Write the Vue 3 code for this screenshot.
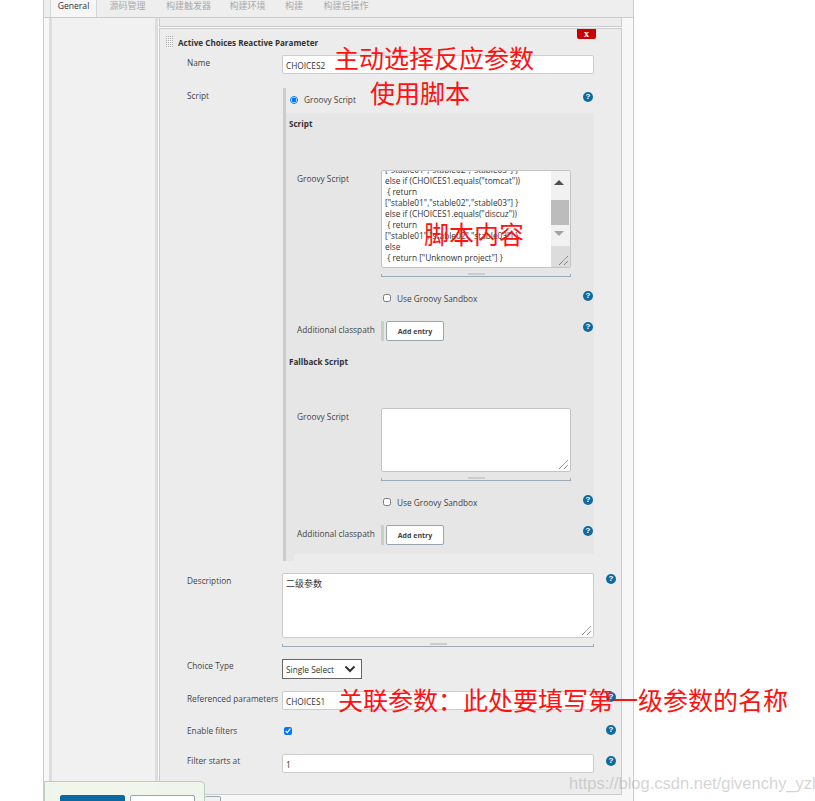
<template>
  <div class="page">
    <div class="shell">
      <div class="tabs">
        <span v-for="(tab, i) in tabs" :key="tab.text" class="tab" :class="{ active: i === 0 }" :style="{ width: tab.width + 'px' }">{{ tab.text }}</span>
      </div>

      <div class="body">
        <div class="side"></div>
        <div class="main">
          <div class="prev-panel"></div>

          <div class="panel">
            <span class="close">x</span>
            <div class="panel-head">
              <span class="grip"></span>
              <b>Active Choices Reactive Parameter</b>
            </div>

            <div class="row name-row">
              <label>Name</label>
              <div class="control"><div class="input">CHOICES2</div></div>
            </div>

            <div class="row script-row">
              <label>Script</label>
              <div class="script-box">
                <div class="radio-line">
                  <input type="radio" checked />
                  <span>Groovy Script</span>
                  <i class="help">?</i>
                </div>
                <div class="script-gray">
                  <section v-for="s in scripts" :key="s.title" class="script-sec">
                    <h4>{{ s.title }}</h4>
                    <div class="sub-row">
                      <label>Groovy Script</label>
                      <div class="ta-wrap">
                        <div class="ta" :style="{ height: s.height + 'px' }">
                          <div v-if="s.lines.length" class="code">
                            <div v-for="(line, n) in s.lines" :key="n" class="code-line">{{ line }}</div>
                          </div>
                          <div v-if="s.lines.length" class="scrollbar">
                            <span class="arrow up"></span>
                            <span class="thumb"></span>
                            <span class="arrow down"></span>
                            <span class="corner"></span>
                          </div>
                          <svg class="resize" width="11" height="11" viewBox="0 0 11 11">
                            <path d="M1 10 10 1M6 10 10 6" stroke="#555" stroke-width="1" stroke-dasharray="1 .6" fill="none" />
                          </svg>
                        </div>
                        <div class="ta-handle"></div>
                      </div>
                    </div>
                    <div class="sandbox">
                      <input type="checkbox" />
                      <span>Use Groovy Sandbox</span>
                      <i class="help">?</i>
                    </div>
                    <div class="sub-row classpath">
                      <label>Additional classpath</label>
                      <span class="cp-bar"></span>
                      <button>Add entry</button>
                      <i class="help">?</i>
                    </div>
                  </section>
                </div>
                <div class="gray-tail"></div>
              </div>
            </div>

            <div class="row desc-row">
              <label>Description</label>
              <div class="control">
                <div class="ta desc">
                  <span class="desc-text">二级参数</span>
                  <svg class="resize" width="11" height="11" viewBox="0 0 11 11">
                    <path d="M1 10 10 1M6 10 10 6" stroke="#555" stroke-width="1" stroke-dasharray="1 .6" fill="none" />
                  </svg>
                </div>
                <div class="ta-handle"></div>
              </div>
              <i class="help">?</i>
            </div>

            <div class="row choice-row">
              <label>Choice Type</label>
              <div class="select-wrap">
                <select class="select"><option>Single Select</option></select>
                <svg class="chevron" width="12" height="8" viewBox="0 0 12 8">
                  <path d="M1.5 1.5 6 6l4.5-4.5" stroke="#333" stroke-width="2" fill="none" />
                </svg>
              </div>
            </div>

            <div class="row ref-row">
              <label>Referenced parameters</label>
              <div class="control"><div class="input">CHOICES1</div></div>
              <i class="help">?</i>
            </div>

            <div class="row filter-row">
              <label>Enable filters</label>
              <div class="control"><input class="filter-check" type="checkbox" checked /></div>
              <i class="help">?</i>
            </div>

            <div class="row starts-row">
              <label>Filter starts at</label>
              <div class="control"><div class="input">1</div></div>
              <i class="help">?</i>
            </div>
          </div>
        </div>
      </div>
    </div>

    <div class="bottom-bar">
      <span class="btn primary"></span>
      <span class="btn"></span>
    </div>
    <span class="btn behind"></span>

    <!-- red notes pasted over the screenshot -->
    <span class="note n1">主动选择反应参数</span>
    <span class="note n2">使用脚本</span>
    <span class="note n3">脚本内容</span>
    <span class="note n4">{{ refNote }}</span>
    <span class="watermark">https://blog.csdn.net/givenchy_yzl</span>
  </div>
</template>

<script setup>
const refNote = '关联参数\uFF1A此处要填写第一级参数的名称'

const tabs = [
  { text: 'General', width: 47 },
  { text: '源码管理', width: 61 },
  { text: '构建触发器', width: 61 },
  { text: '构建环境', width: 57 },
  { text: '构建', width: 36 },
  { text: '构建后操作', width: 68 },
]

const scripts = [
  {
    title: 'Script',
    height: 98,
    lines: [
      '["stable01","stable02","stable03"] }',
      'else if (CHOICES1.equals("tomcat"))',
      ' { return',
      '["stable01","stable02","stable03"] }',
      'else if (CHOICES1.equals("discuz"))',
      ' { return',
      '["stable01","stable02","stable03"] }',
      'else',
      ' { return ["Unknown project"] }',
    ],
  },
  { title: 'Fallback Script', height: 64, lines: [] },
]
</script>

<style>
html, body { margin: 0; background: #fff; }
</style>

<style scoped>
.page {
  position: relative;
  width: 815px;
  height: 801px;
  overflow: hidden;
  background: #fff;
  font-family: "Open Sans", "Noto Sans CJK SC", sans-serif;
  font-size: 8.3px;
  color: #444;
}

.shell {
  width: 591px;
  height: 801px;
  margin-left: 43px;
  border-left: 1px solid #ccc;
  border-right: 1px solid #ccc;
  box-sizing: border-box;
  background: #f7f7f7;
}

.tabs {
  display: flex;
  height: 18px;
  box-sizing: border-box;
  padding-left: 6px;
  background: #eee;
  border-bottom: 1px solid #ccc;
}
.tab {
  box-sizing: border-box;
  font-size: 9px;
  line-height: 12px;
  text-align: center;
  color: #aaa;
}
.tab.active {
  background: #f6f6f6;
  border-left: 1px solid #d5d5d5;
  border-right: 1px solid #d5d5d5;
  font-size: 8.6px;
  color: #333;
}

.body {
  display: flex;
  height: 783px;
}
.side {
  width: 103px;
  margin-left: 5px;
  background: #f1f1f1;
  border-left: 3px solid #ddd;
  border-right: 3px solid #ddd;
}
.main {
  width: 463px;
  margin-left: 1px;
}
.prev-panel {
  height: 9px;
  background: #ececec;
  border: 1px solid #ccc;
  border-top: 0;
  box-sizing: border-box;
  margin-bottom: 1px;
}

.panel {
  position: relative;
  height: 767px;
  box-sizing: border-box;
  background: #ececec;
  border: 1px solid #ccc;
}
.close {
  position: absolute;
  top: 0;
  right: 25px;
  width: 19px;
  height: 10px;
  background: #c00;
  border-radius: 0 0 2px 2px;
  color: #fff;
  font: bold 10px/9px "Liberation Serif", serif;
  text-align: center;
}
.panel-head {
  display: flex;
  align-items: center;
  gap: 5px;
  height: 26px;
  padding-left: 6px;
  font-size: 8.1px;
  color: #333;
}
.grip {
  width: 7px;
  height: 12px;
  background-image:
    repeating-linear-gradient(0deg, #f4f4f4 0 1px, transparent 1px 2px),
    repeating-linear-gradient(90deg, #aaa 0 1px, transparent 1px 2px);
}

.row {
  display: flex;
  align-items: flex-start;
  padding-left: 27px;
}
.row > label {
  width: 95px;
  flex-shrink: 0;
  margin-top: 1px;
  white-space: nowrap;
}
label {
  line-height: 14px;
  white-space: nowrap;
}
.control {
  width: 312px;
  flex-shrink: 0;
}
.row > .help {
  margin: 1px 0 0 12px;
}

.input {
  height: 19px;
  box-sizing: border-box;
  background: #fff;
  border: 1px solid #ccc;
  border-radius: 2px;
  padding-left: 3px;
  line-height: 20px;
  color: #333;
}
.name-row { margin-bottom: 14px; }

.script-row { margin-bottom: 12px; }
.script-box {
  width: 308px;
  margin-left: 1px;
  border-left: 3px solid #ccc;
  height: 473px;
}
.radio-line {
  display: flex;
  align-items: center;
  height: 25px;
  box-sizing: border-box;
  padding: 0 0 2px 4px;
  gap: 6px;
}
.radio-line input {
  width: 8px;
  height: 8px;
  margin: 0;
}
.radio-line .help {
  align-self: flex-start;
  margin: 4px 1px 0 auto;
}

.script-gray {
  width: 308px;
  height: 441px;
  background: #e6e6e6;
  overflow: hidden;
}
.gray-tail {
  width: 8px;
  height: 7px;
  background: #e6e6e6;
}
.script-sec { padding-left: 3px; padding-top: 4px; }
.script-sec + .script-sec { padding-top: 5px; }
h4 {
  margin: 0 0 39px;
  font-size: 8.1px;
  line-height: 14px;
  color: #333;
}
.sub-row {
  display: flex;
  align-items: flex-start;
  padding-left: 8px;
}
.sub-row > label {
  width: 84px;
  flex-shrink: 0;
  padding-top: 2px;
}
.ta-wrap { width: 190px; }
.ta {
  position: relative;
  display: flex;
  box-sizing: border-box;
  background: #fff;
  border: 1px solid #c4c4c4;
  border-radius: 2px;
  overflow: hidden;
}
.code {
  flex: 1;
  padding: 0 0 0 3px;
  margin-top: -7px;
  line-height: 11px;
  color: #333;
  white-space: pre;
  overflow: hidden;
}
.scrollbar {
  position: relative;
  width: 19px;
  background: #f1f1f1;
}
.arrow {
  position: absolute;
  left: 3px;
  width: 0;
  height: 0;
  border-left: 5px solid transparent;
  border-right: 5px solid transparent;
}
.arrow.up { top: 9px; border-bottom: 5px solid #505050; }
.arrow.down { top: 60px; border-top: 5px solid #a3a3a3; }
.thumb {
  position: absolute;
  top: 29px;
  left: 0;
  width: 18px;
  height: 25px;
  background: #bcbcbc;
}
.corner {
  position: absolute;
  left: 0;
  right: 0;
  top: 75px;
  bottom: 0;
  background: #dcdcdc;
}
.resize {
  position: absolute;
  right: 1px;
  bottom: 1px;
}
.ta-handle {
  position: relative;
  height: 3px;
  margin-top: 6px;
  box-sizing: border-box;
  border: 1px solid #9aabb8;
  border-top: 0;
}
.ta-handle::after {
  content: "";
  position: absolute;
  left: 50%;
  top: -1px;
  width: 17px;
  height: 2px;
  margin-left: -8px;
  background: #ccc;
}

.sandbox {
  display: flex;
  align-items: center;
  height: 10px;
  margin: 16px 0 18px 94px;
  gap: 6px;
}
.sandbox input {
  width: 8px;
  height: 8px;
  margin: 0;
}
.sandbox .help { margin: -4px 1px 0 auto; }

.classpath { height: 20px; }
.classpath > label { padding-top: 2px; }
.cp-bar {
  width: 3px;
  height: 20px;
  background: #ccc;
  margin-right: 2px;
}
.classpath button {
  width: 58px;
  height: 20px;
  padding: 0;
  box-sizing: border-box;
  background: #fff;
  border: 1px solid #9aa5ad;
  border-radius: 2px;
  font: bold 7px "Open Sans", sans-serif;
  color: #444;
}
.classpath .help { margin: 1px 1px 0 auto; }
.classpath { padding-bottom: 9px; }

.desc {
  height: 65px;
  border-color: #ccc;
  padding: 4px 3px;
  line-height: 12px;
  color: #333;
}
.desc-text { font-size: 9px; }
.desc-row { margin-bottom: 12px; height: 74px; }
.choice-row { margin-bottom: 12px; height: 20px; }
.choice-row > label { margin-top: 0; }
.select-wrap {
  position: relative;
  width: 80px;
  height: 20px;
}
.select {
  appearance: none;
  display: block;
  width: 80px;
  height: 20px;
  box-sizing: border-box;
  background: #fff;
  border: 1px solid #666;
  border-radius: 0;
  padding: 0 0 0 3px;
  font: 8.3px "Open Sans", sans-serif;
  color: #333;
}
.chevron {
  position: absolute;
  top: 6px;
  right: 6px;
}
.ref-row { height: 19px; margin-bottom: 17px; }
.filter-row { height: 8px; margin-bottom: 19px; }
.filter-row > label { margin-top: -3px; }
.filter-row > .help { margin-top: -2px; }
.filter-check {
  display: block;
  width: 8px;
  height: 8px;
  margin: 0 0 0 2px;
}
.starts-row { height: 19px; }
.starts-row > label { margin-top: 0; }
.starts-row > .help { margin-top: 2px; }

.help {
  display: block;
  flex-shrink: 0;
  width: 10px;
  height: 10px;
  border-radius: 50%;
  background: #0e6aa0;
  color: #fff;
  font: bold 8px/10px "Liberation Sans", sans-serif;
  text-align: center;
}

.bottom-bar {
  position: absolute;
  left: 44px;
  top: 781px;
  width: 161px;
  height: 24px;
  box-sizing: border-box;
  background: rgba(240, 245, 236, 0.95);
  border: 1px solid #b5d0bc;
  border-bottom: 0;
  border-radius: 0 5px 0 0;
}
.btn {
  position: absolute;
  top: 13px;
  left: 85px;
  width: 65px;
  height: 14px;
  box-sizing: border-box;
  background: #fff;
  border: 1px solid #9aa5ad;
  border-radius: 2px;
}
.btn.primary {
  left: 15px;
  background: #0b68a0;
  border-color: #0b68a0;
}
.btn.behind {
  left: 205px;
  top: 796px;
  width: 16px;
  background: #f1f1f1;
  border-left: 0;
}

.note {
  position: absolute;
  font: 25px/30px "Noto Sans CJK SC", sans-serif;
  color: #f11;
  white-space: nowrap;
}
.n1 { left: 334px; top: 42px; }
.n2 { left: 370px; top: 77px; }
.n3 { left: 424px; top: 218px; }
.n4 { left: 338px; top: 684px; }

.watermark {
  position: absolute;
  left: 569px;
  top: 772px;
  font: 16.5px/22px "Liberation Sans", sans-serif;
  color: rgba(170, 170, 170, 0.5);
  white-space: nowrap;
}
</style>
